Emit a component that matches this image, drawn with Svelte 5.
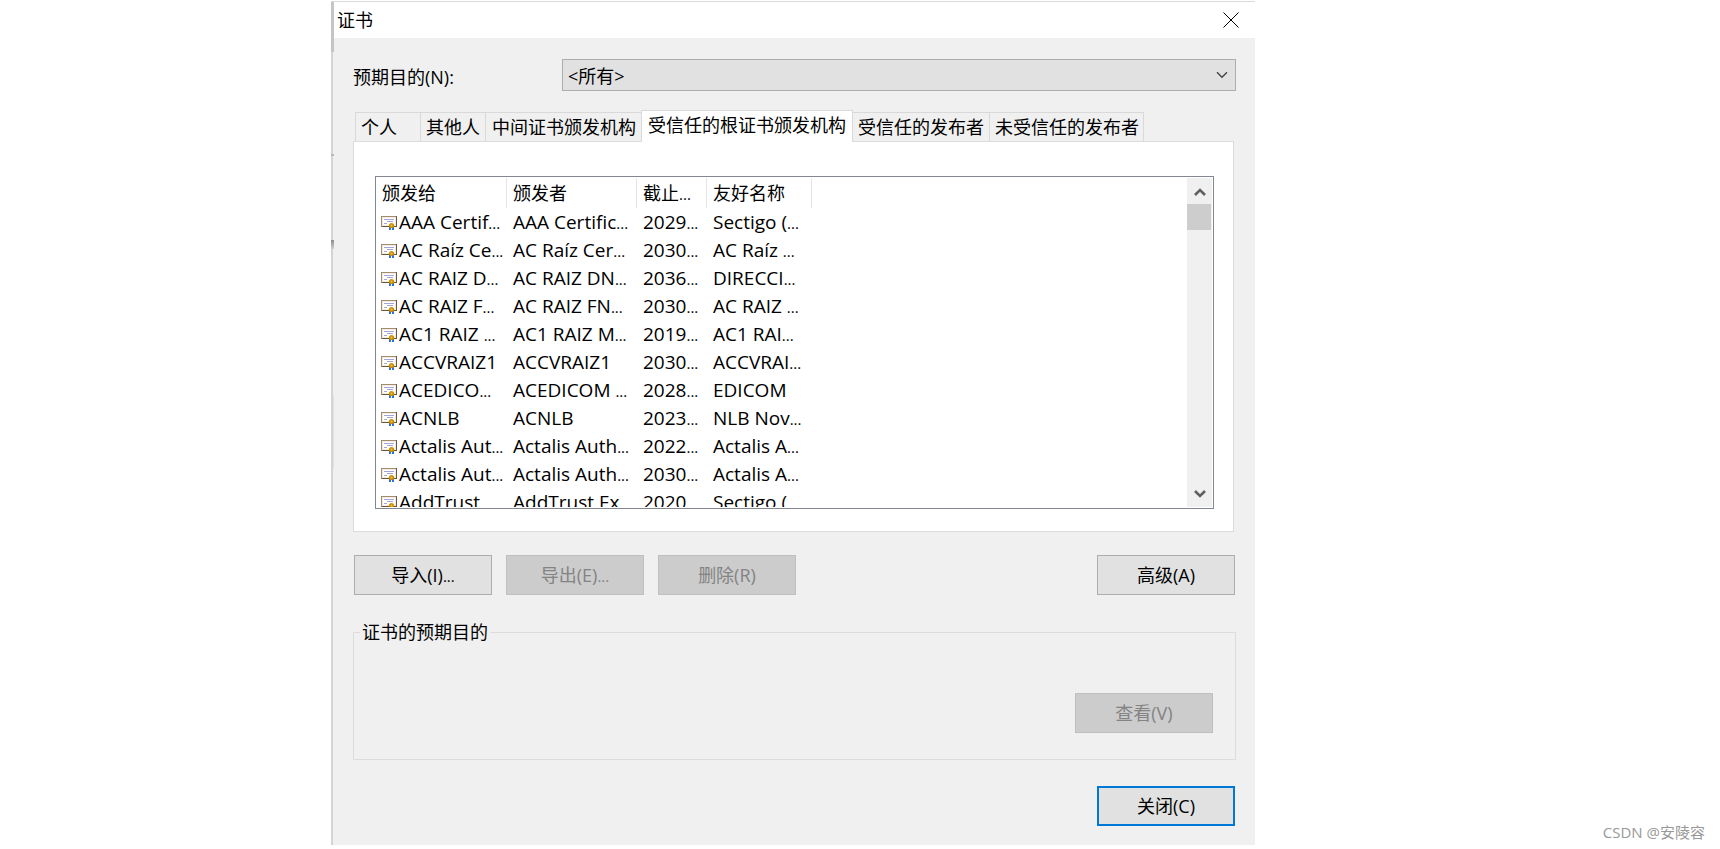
<script lang="ts">
	type Certificate = { to: string; by: string; expires: string; name: string };

	const purposes = ['<所有>'];
	const tabs = ['个人', '其他人', '中间证书颁发机构', '受信任的根证书颁发机构', '受信任的发布者', '未受信任的发布者'];
	const certificates: Certificate[] = [
		{ to: 'AAA Certif...', by: 'AAA Certific...', expires: '2029...', name: 'Sectigo (...' },
		{ to: 'AC Raíz Ce...', by: 'AC Raíz Cer...', expires: '2030...', name: 'AC Raíz ...' },
		{ to: 'AC RAIZ D...', by: 'AC RAIZ DN...', expires: '2036...', name: 'DIRECCI...' },
		{ to: 'AC RAIZ F...', by: 'AC RAIZ FN...', expires: '2030...', name: 'AC RAIZ ...' },
		{ to: 'AC1 RAIZ ...', by: 'AC1 RAIZ M...', expires: '2019...', name: 'AC1 RAI...' },
		{ to: 'ACCVRAIZ1', by: 'ACCVRAIZ1', expires: '2030...', name: 'ACCVRAI...' },
		{ to: 'ACEDICO...', by: 'ACEDICOM ...', expires: '2028...', name: 'EDICOM' },
		{ to: 'ACNLB', by: 'ACNLB', expires: '2023...', name: 'NLB Nov...' },
		{ to: 'Actalis Aut...', by: 'Actalis Auth...', expires: '2022...', name: 'Actalis A...' },
		{ to: 'Actalis Aut...', by: 'Actalis Auth...', expires: '2030...', name: 'Actalis A...' },
		{ to: 'AddTrust ...', by: 'AddTrust Ex...', expires: '2020...', name: 'Sectigo (...' }
	];

	let purpose = $state(purposes[0]);
	let activeTab = $state(3);
</script>

{#snippet clipped(text: string)}
	{#if text.endsWith('...')}{text.slice(0, -3)}<span class="dots">...</span>{:else}{text}{/if}
{/snippet}

<div class="desktop">
	<main class="dialog">
		<header class="titlebar">
			<h1>证书</h1>
			<button class="close" aria-label="关闭">
				<svg width="16" height="16" viewBox="0 0 16 16"><path d="M.5.5l15 15M15.5.5l-15 15" /></svg>
			</button>
		</header>

		<div class="body">
			<div class="purpose">
				<label for="purpose">预期目的(N):</label>
				<div class="combo">
					<select id="purpose" bind:value={purpose}>
						{#each purposes as item}
							<option value={item}>{item}</option>
						{/each}
					</select>
					<svg width="12" height="8" viewBox="0 0 12 8"><path d="M1 1.2l5 5 5-5" /></svg>
				</div>
			</div>

			<div class="tabs" role="tablist">
				{#each tabs as tab, i}
					<button role="tab" class="tab" class:active={i === activeTab} aria-selected={i === activeTab} onclick={() => (activeTab = i)}>{tab}</button>
				{/each}
			</div>

			<section class="panel">
				<div class="list">
					<div class="rows">
						<table>
							<thead>
								<tr>
									<th class="to">颁发给</th>
									<th class="by">颁发者</th>
									<th class="date">截止<span class="dots">...</span></th>
									<th class="name">友好名称</th>
								</tr>
							</thead>
							<tbody>
								{#each certificates as cert}
									<tr>
										<td class="first">
											<svg class="cert" width="16" height="14" viewBox="0 0 16 14">
												<path fill="#a58c6b" d="M0 0h16v11H0z" />
												<path fill="#6f5437" d="M15 0h1v11h-1zM1 10h14v1H1z" />
												<path fill="#f1ebe4" d="M1 1h14v9H1z" />
												<path fill="#fff" d="M2 2h12v7H2z" />
												<path fill="#a3a6d4" d="M3 3h10v1H3zM6 5h6v1H6zM3 7h3v1H3z" />
												<path fill="#2f6fe0" d="M8 11h2v3H8zM11 11h2v3h-2z" />
												<circle fill="#c98f08" cx="10.5" cy="9.5" r="2.6" />
												<circle fill="#f2bd2c" cx="10.5" cy="9.4" r="1" />
											</svg>{@render clipped(cert.to)}
										</td>
										<td>{@render clipped(cert.by)}</td>
										<td>{@render clipped(cert.expires)}</td>
										<td>{@render clipped(cert.name)}</td>
									</tr>
								{/each}
							</tbody>
						</table>
					</div>
					<div class="scrollbar">
						<button aria-label="向上滚动">
							<svg width="12" height="10" viewBox="0 0 12 10"><path d="M1 8l5-5 5 5" /></svg>
						</button>
						<div class="thumb"></div>
						<button class="down" aria-label="向下滚动">
							<svg width="12" height="10" viewBox="0 0 12 10"><path d="M1 2l5 5 5-5" /></svg>
						</button>
					</div>
				</div>
			</section>

			<div class="actions">
				<button class="btn">导入(I)<span class="dots">...</span></button>
				<button class="btn" disabled>导出(E)<span class="dots">...</span></button>
				<button class="btn" disabled>删除(R)</button>
				<button class="btn advanced">高级(A)</button>
			</div>

			<fieldset>
				<legend>证书的预期目的</legend>
				<button class="btn" disabled>查看(V)</button>
			</fieldset>

			<footer>
				<button class="btn default">关闭(C)</button>
			</footer>
		</div>
	</main>
	<div class="watermark">CSDN @安陵容</div>
</div>

<style>
	:global(body) {
		background: #fff;
	}

	.desktop {
		position: relative;
		display: grid;
		grid-template-columns: 331fr 924fr 465fr;
		min-height: 100vh;
		align-items: start;
		box-sizing: border-box;
		padding-top: 1px;
		font: 18px/24px 'Open Sans', 'Noto Sans CJK SC', sans-serif;
		color: #000;
	}

	button,
	select {
		font: inherit;
		color: inherit;
		margin: 0;
		border-radius: 0;
	}

	.dialog {
		position: relative;
		grid-column: 2;
		border-top: 1px solid #d9dadb;
		border-left: 2px solid #d4d4d5;
		background: #f0f0f0;
	}

	/* edge of the window behind, showing along the left border */
	.dialog::before {
		content: '';
		position: absolute;
		top: 0;
		left: -2px;
		width: 3px;
		height: 466px;
		background:
			linear-gradient(#c3c5c8, #c3c5c8) 0 0 / 3px 50px no-repeat,
			linear-gradient(#bcbcbc, #bcbcbc) 0 152px / 3px 2px no-repeat,
			linear-gradient(#8c8c8c, #cfcfcf) 0 238px / 3px 9px no-repeat,
			linear-gradient(#dbe2e8, #dbe2e8) 2px 394px / 1px 72px no-repeat;
	}

	.titlebar {
		display: flex;
		align-items: center;
		justify-content: space-between;
		height: 36px;
		padding: 0 16px 0 4px;
		background: #fff;
	}

	h1 {
		margin: 0;
		font-size: 18px;
		font-weight: 400;
	}

	.close {
		display: flex;
		padding: 0;
		border: 0;
		background: none;
	}

	.close path {
		stroke: #000;
		fill: none;
	}

	.body {
		padding: 21px 19px 19px 20px;
	}

	.purpose {
		display: flex;
		align-items: center;
	}

	.purpose label {
		width: 209px;
		padding-top: 4px;
	}

	.combo {
		position: relative;
		flex: 1;
	}

	select {
		display: block;
		width: 100%;
		height: 32px;
		padding: 1px 5px 0;
		border: 1px solid #adadad;
		background: #e1e1e1;
		appearance: none;
	}

	.combo svg {
		position: absolute;
		right: 8px;
		top: 12px;
		pointer-events: none;
	}

	.combo path {
		stroke: #444;
		stroke-width: 1.4;
		fill: none;
	}

	.tabs {
		display: flex;
		align-items: flex-end;
		margin-top: 19px;
		padding-left: 2px;
	}

	.tab {
		height: 29px;
		padding: 0 5px;
		border: 1px solid #d9d9d9;
		border-width: 1px 0 0 1px;
		background: #f0f0f0;
		text-align: left;
		white-space: nowrap;
	}

	.tab:first-child {
		min-width: 65px;
	}

	.tab:nth-child(3) {
		padding-left: 6px;
	}

	.tab:last-child {
		padding-right: 4px;
		border-right-width: 1px;
	}

	.tab.active {
		height: 32px;
		margin-bottom: -1px;
		padding: 0 6px 3px;
		border-right-width: 1px;
		background: #fff;
		z-index: 1;
	}

	.tab.active + .tab {
		border-left-width: 0;
	}

	.panel {
		margin-right: 2px;
		padding: 34px 19px 22px 21px;
		border: 1px solid #dcdcdc;
		background: #fff;
	}

	.list {
		display: flex;
		padding: 1px;
		padding-left: 0;
		border: 1px solid #828790;
	}

	.rows {
		flex: 1;
		height: 329px;
		overflow: hidden;
	}

	table {
		table-layout: fixed;
		width: 436px;
		border-collapse: separate;
		border-spacing: 0;
	}

	th {
		box-sizing: border-box;
		height: 30px;
		padding: 0 0 0 6px;
		border-right: 1px solid #e5e5e5;
		font-weight: 400;
		text-align: left;
		white-space: nowrap;
	}

	.to {
		width: 131px;
	}

	.by {
		width: 130px;
	}

	.date {
		width: 70px;
	}

	.name {
		width: 105px;
	}

	td {
		height: 28px;
		padding: 0 0 0 6px;
		font-size: 19px;
		line-height: 28px;
		white-space: nowrap;
	}

	.first {
		padding-left: 5px;
	}

	.cert {
		margin-right: 2px;
		vertical-align: -1px;
	}

	.dots {
		font-size: 15px;
		line-height: 1;
	}

	.scrollbar {
		display: flex;
		flex-direction: column;
		width: 25px;
		background: #f0f0f0;
	}

	.scrollbar button {
		display: flex;
		align-items: center;
		justify-content: center;
		height: 26px;
		padding: 2px 0 0;
		border: 0;
		background: none;
	}

	.scrollbar .down {
		margin-top: auto;
		padding: 0;
	}

	.scrollbar path {
		stroke: #606060;
		stroke-width: 2.6;
		fill: none;
	}

	.thumb {
		width: 24px;
		height: 26px;
		background: #cdcdcd;
	}

	.actions {
		display: flex;
		gap: 14px;
		margin-top: 23px;
		padding: 0 1px;
	}

	.btn {
		width: 138px;
		height: 40px;
		padding: 0;
		border: 1px solid #adadad;
		background: #e1e1e1;
	}

	.btn:disabled {
		border-color: #bfbfbf;
		background: #ccc;
		color: #838383;
	}

	.advanced {
		margin-left: auto;
	}

	fieldset {
		display: flex;
		justify-content: flex-end;
		margin: 25px 0 0;
		padding: 49px 22px 26px 6px;
		border: 1px solid #dcdcdc;
	}

	legend {
		padding: 0 2px;
	}

	footer {
		display: flex;
		justify-content: flex-end;
		margin-top: 26px;
		padding-right: 1px;
	}

	.default {
		border: 2px solid #0078d7;
	}

	.watermark {
		position: absolute;
		right: 15px;
		bottom: 5px;
		font-size: 15px;
		color: #999;
	}
</style>
